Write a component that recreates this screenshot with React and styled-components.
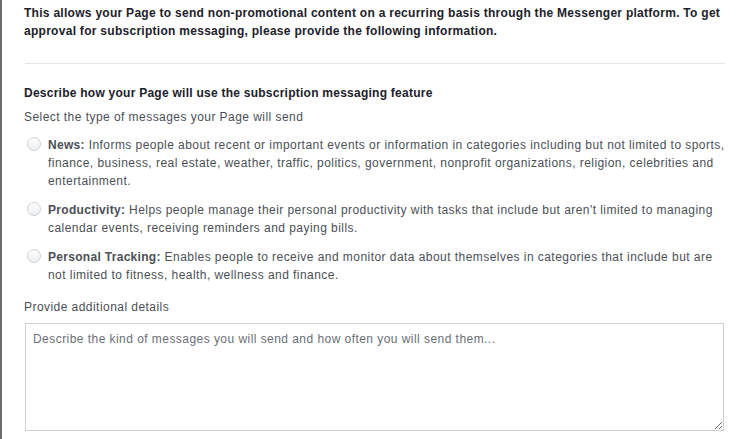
import React from "react";
import styled, { createGlobalStyle } from "styled-components";

const Global = createGlobalStyle`
  html, body { margin: 0; padding: 0; background: #fff; }
  body { font-family: "Liberation Sans", Arial, Helvetica, sans-serif; font-size: 12px; }
`;

const Page = styled.div`
  box-sizing: border-box;
  min-height: 439px;
  border-left: 2px solid #6b6b6b;
  padding: 4px 12px 0 22px;
  color: #4b4f56;
  line-height: 18px;
  letter-spacing: 0.45px;
`;

const Intro = styled.p`
  margin: 0;
  font-weight: bold;
  color: #1d2129;
  letter-spacing: 0.28px;
`;

const Divider = styled.hr`
  border: 0;
  border-top: 1px solid #e5e5e5;
  margin: 23px 0 20px 1px;
`;

const Heading = styled.div`
  font-weight: bold;
  color: #1d2129;
  letter-spacing: 0.25px;
  margin-bottom: 6px;
`;

const Label = styled.div`
  color: #4b4f56;
  margin-bottom: ${(p) => p.$gap || 10}px;
`;

const Options = styled.div`
  display: flex;
  flex-direction: column;
  gap: 11px;
  margin-bottom: 14px;
`;

const Option = styled.label`
  display: flex;
  align-items: flex-start;
  gap: 7px;
  padding-left: 3px;
  cursor: pointer;
`;

const Radio = styled.span`
  flex: none;
  box-sizing: border-box;
  width: 14px;
  height: 14px;
  margin-top: 1px;
  border-radius: 50%;
  border: 1px solid #cdd0d4;
  background: linear-gradient(#ffffff, #eceef1);
`;

const OptionText = styled.span`
  color: #4b4f56;
  b { color: #4b4f56; font-weight: bold; letter-spacing: 0.3px; }
`;

const TextArea = styled.textarea`
  display: block;
  box-sizing: border-box;
  width: 699px;
  height: 108px;
  margin: 0 0 0 1px;
  padding: 6px 7px;
  border: 1px solid #ccd0d5;
  border-radius: 0;
  font-family: inherit;
  font-size: 12px;
  line-height: 18px;
  letter-spacing: 0.45px;
  color: #1d2129;
  resize: vertical;
  outline: none;
  &::placeholder { color: #6b6f76; opacity: 1; }
`;

const options = [
  {
    title: "News:",
    text: " Informs people about recent or important events or information in categories including but not limited to sports, finance, business, real estate, weather, traffic, politics, government, nonprofit organizations, religion, celebrities and entertainment.",
  },
  {
    title: "Productivity:",
    text: " Helps people manage their personal productivity with tasks that include but aren't limited to managing calendar events, receiving reminders and paying bills.",
  },
  {
    title: "Personal Tracking:",
    text: " Enables people to receive and monitor data about themselves in categories that include but are not limited to fitness, health, wellness and finance.",
  },
];

export default function App() {
  return (
    <>
      <Global />
      <Page>
        <Intro>
          This allows your Page to send non-promotional content on a recurring basis through the Messenger platform. To get
          approval for subscription messaging, please provide the following information.
        </Intro>
        <Divider />
        <Heading>Describe how your Page will use the subscription messaging feature</Heading>
        <Label $gap={10}>Select the type of messages your Page will send</Label>
        <Options>
          {options.map((o) => (
            <Option key={o.title}>
              <Radio />
              <OptionText>
                <b>{o.title}</b>
                {o.text}
              </OptionText>
            </Option>
          ))}
        </Options>
        <Label $gap={7}>Provide additional details</Label>
        <TextArea placeholder="Describe the kind of messages you will send and how often you will send them..." />
      </Page>
    </>
  );
}
